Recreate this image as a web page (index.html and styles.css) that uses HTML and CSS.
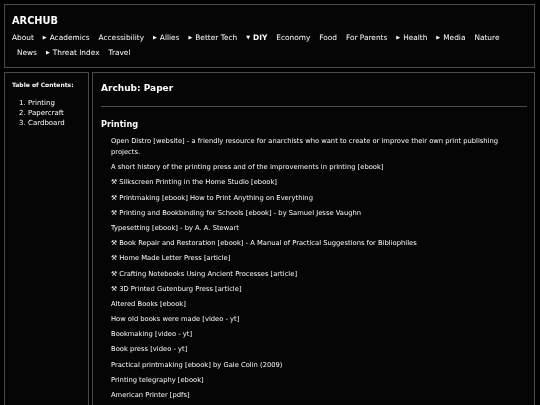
FILE: index.html
```html
<!DOCTYPE html>
<html>
<head>
<meta charset="utf-8">
<link rel="stylesheet" href="styles.css">
</head>
<body>
<header class="site-header">
  <div class="brand">ARCHUB</div>
  <nav class="nav">
    <span class="nav-item">About</span>
    <span class="nav-item"><span class="tri">▶</span>Academics</span>
    <span class="nav-item">Accessibility</span>
    <span class="nav-item"><span class="tri">▶</span>Allies</span>
    <span class="nav-item"><span class="tri">▶</span>Better Tech</span>
    <span class="nav-item active"><span class="tri">▼</span>DIY</span>
    <span class="nav-item">Economy</span>
    <span class="nav-item">Food</span>
    <span class="nav-item">For Parents</span>
    <span class="nav-item"><span class="tri">▶</span>Health</span>
    <span class="nav-item"><span class="tri">▶</span>Media</span>
    <span class="nav-item">Nature</span>
    <span class="nav-item">News</span>
    <span class="nav-item"><span class="tri">▶</span>Threat Index</span>
    <span class="nav-item">Travel</span>
  </nav>
</header>
<div class="layout">
  <aside class="toc">
    <div class="toc-title">Table of Contents:</div>
    <ol class="toc-list">
      <li>Printing</li>
      <li>Papercraft</li>
      <li>Cardboard</li>
    </ol>
  </aside>
  <main class="content">
    <h1 class="page-title">Archub: Paper</h1>
    <hr class="rule">
    <h2 class="section-title">Printing</h2>
    <ul class="links">
      <li>Open Distro [website] - a friendly resource for anarchists who want to create or improve their own print publishing projects.</li>
      <li>A short history of the printing press and of the improvements in printing [ebook]</li>
      <li>⚒ Silkscreen Printing in the Home Studio [ebook]</li>
      <li>⚒ Printmaking [ebook] How to Print Anything on Everything</li>
      <li>⚒ Printing and Bookbinding for Schools [ebook] - by Samuel Jesse Vaughn</li>
      <li>Typesetting [ebook] - by A. A. Stewart</li>
      <li>⚒ Book Repair and Restoration [ebook] - A Manual of Practical Suggestions for Bibliophiles</li>
      <li>⚒ Home Made Letter Press [article]</li>
      <li>⚒ Crafting Notebooks Using Ancient Processes [article]</li>
      <li>⚒ 3D Printed Gutenburg Press [article]</li>
      <li>Altered Books [ebook]</li>
      <li>How old books were made [video - yt]</li>
      <li>Bookmaking [video - yt]</li>
      <li>Book press [video - yt]</li>
      <li>Practical printmaking [ebook] by Gale Colin (2009)</li>
      <li>Printing telegraphy [ebook]</li>
      <li>American Printer [pdfs]</li>
    </ul>
  </main>
</div>
</body>
</html>
```

FILE: styles.css
```css
html, body {
  margin: 0;
  padding: 0;
  background: #000;
  color: #fafafa;
  font-family: "DejaVu Sans", "Open Sans", sans-serif;
  overflow: hidden;
}
body {
  padding: 4px 5px 0 4px;
  height: 405px;
  box-sizing: border-box;
  filter: grayscale(1);
}
.site-header {
  border: 1px solid #4a4a4a;
  background: #050505;
  height: 64px;
  box-sizing: border-box;
  padding: 8px 0 0 7px;
}
.brand {
  font-size: 9.8px;
  font-weight: 700;
  color: #ffffff;
  line-height: 16px;
}
.nav {
  font-size: 7.4px;
  line-height: 15px;
  margin-top: 1px;
  padding-left: 5px;
  text-indent: -5px;
}
.nav-item {
  margin-right: 6.6px;
  white-space: nowrap;
}
.nav-item.active {
  font-weight: 700;
}
.tri {
  font-size: 5px;
  margin-right: 3px;
  vertical-align: 1px;
}
.layout {
  display: flex;
  gap: 3px;
  margin-top: 4px;
  height: 340px;
}
.toc {
  width: 85px;
  flex: none;
  border: 1px solid #4a4a4a;
  background: #050505;
  box-sizing: border-box;
  padding: 7px 0 0 7px;
  font-size: 7px;
}
.toc-title {
  font-weight: 700;
  line-height: 10px;
  font-size: 6px;
}
.toc-list {
  margin: 8px 0 0 0;
  padding-left: 16px;
  line-height: 10px;
}
.content {
  flex: 1;
  border: 1px solid #4a4a4a;
  background: #050505;
  box-sizing: border-box;
  padding: 8px 7px 0 8px;
}
.page-title {
  font-size: 9px;
  font-weight: 700;
  margin: 0;
  line-height: 14px;
}
.rule {
  border: 0;
  border-top: 1px solid #4a4a4a;
  margin: 11px 0 10px 0;
}
.section-title {
  font-size: 8.2px;
  font-weight: 700;
  margin: 0 0 5px 0;
  line-height: 14px;
}
.links {
  list-style: none;
  margin: 0;
  padding-left: 10px;
  font-size: 6.75px;
  line-height: 11px;
}
.links li {
  margin-bottom: 4.2px;
}
```
